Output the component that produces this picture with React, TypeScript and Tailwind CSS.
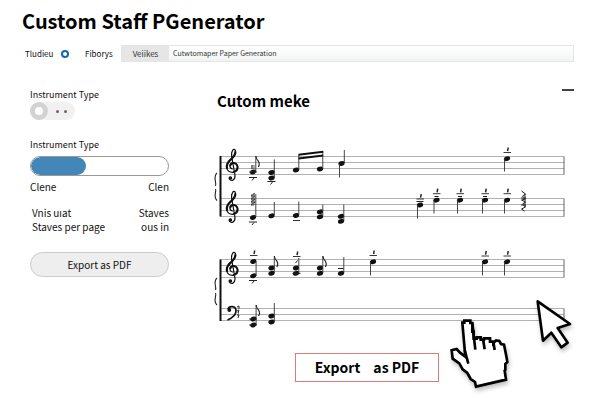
import React from 'react';

interface NoteProps {
  x: number;
  heads: number[];
  stem: [number, number];
  down?: boolean;
  flag?: boolean;
}

function Note({ x, heads, stem, down, flag }: NoteProps) {
  const sx = down ? x - 2.5 : x + 2.8;
  return (
    <g>
      {heads.map((y) => (
        <ellipse key={y} cx={x} cy={y} rx="3.2" ry="2.3" transform={`rotate(-20 ${x} ${y})`} fill="#111" />
      ))}
      <path d={`M${sx} ${stem[0]}V${stem[1]}`} stroke="#333" strokeWidth="0.9" />
      {flag && (
        <path d={`M${sx} ${stem[0]}q0.5 3 2.5 5q2 3 0 6`} stroke="#222" strokeWidth="1.1" fill="none" />
      )}
    </g>
  );
}

// short ledger line with a tick over it
function Accent({ x, y }: { x: number; y: number }) {
  return (
    <g stroke="#222">
      <path d={`M${x - 3.5} ${y}h7.5`} strokeWidth="0.9" />
      <path d={`M${x + 1.2} ${y - 5}l-0.6 3.6`} strokeWidth="1.5" />
    </g>
  );
}

function LowAccent({ x, y }: { x: number; y: number }) {
  return (
    <path d={`M${x - 4} ${y}h8M${x + 1} ${y + 0.5}l-2 2.5`} stroke="#222" strokeWidth="1" fill="none" />
  );
}

function TrebleClef({ y }: { y: number }) {
  return (
    <g transform={`translate(200 ${y}) scale(0.3333)`} fill="none" stroke="#111" strokeLinecap="round">
      <path
        d="M97 252C86 248 88 234 99 233C118 233 120 262 98 262C76 261 76 240 89 227C101 216 110 208 106 196C101 188 93 198 95 214L105 271C106 287 93 290 88 282"
        strokeWidth="3.6"
      />
      <path d="M81 249C79 240 84 231 92 224C100 217 106 211 106 201" strokeWidth="6.5" />
      <path d="M91 241C94 233 107 231 112 243C114 251 108 259 101 261" strokeWidth="5.5" />
      <circle cx="91" cy="279" r="5.5" fill="#111" stroke="none" />
    </g>
  );
}

function BassClef() {
  return (
    <g fill="none" stroke="#111">
      <path d="M228 309.5C229 305.500 236 305.500 236 311C236 315.500 232 318 227.500 320" strokeWidth="1.7" />
      <circle cx="229.3" cy="310" r="1.9" fill="#111" stroke="none" />
      <path d="M237 307l2-1v3M237 311l2-1-1 3h1M237 315h2l-1 3" strokeWidth="0.9" />
    </g>
  );
}

const staves = [
  [156.5, 162.5, 168.5, 174.5],
  [198.5, 204.5, 210.5, 216.5],
  [259.5, 265.5, 271.5, 277.5],
  [308.5, 314.5, 320.5],
];

function Score() {
  return (
    <svg viewBox="212 140 362 195" className="block w-full" role="img" aria-label="Score preview">
      {staves.map((lines) => (
        <g key={lines[0]} stroke="#a8a8a8" strokeWidth="0.9">
          {lines.map((y) => (
            <path key={y} d={`M220 ${y}H564`} />
          ))}
          <path d={`M564 ${lines[0]}V${lines[lines.length - 1]}`} stroke="#555" />
        </g>
      ))}
      <path d="M220.5 156V216.5M220.5 259.5V321" stroke="#111" strokeWidth="2" />
      {/* braces */}
      <g fill="none" stroke="#222" strokeWidth="1.1">
        <path d="M217 173C212.500 177 217 183 215.500 186M215.500 189C217 192 212.500 196 217 200.500" />
        <path d="M217 278C212.500 282 217 287 215.500 290M215.500 293C217 296 212.500 301 217 305" />
      </g>

      <TrebleClef y={85} />
      <TrebleClef y={127} />
      <TrebleClef y={188} />
      <BassClef />

      {/* first staff */}
      <Note x={253} heads={[172]} stem={[156, 172]} flag />
      <path d="M251 166h4M251 168h4M252 165v4M249 172h8" stroke="#333" strokeWidth="0.8" />
      <LowAccent x={253} y={177.5} />
      <Note x={271.5} heads={[172.5, 178]} stem={[159.5, 178]} />
      <LowAccent x={271.5} y={181.5} />
      <Note x={296} heads={[170]} stem={[155, 170]} />
      <Note x={320} heads={[169]} stem={[151, 169]} />
      <path d="M298.4 154.8L323.2 151.8M298.4 158.6L323.2 155.6" stroke="#111" strokeWidth="2" />
      <Note x={341.5} heads={[163.5]} stem={[150, 163]} />
      <path d="M339.5 164V177.5" stroke="#333" strokeWidth="0.9" />
      <Note x={507} heads={[158.7]} stem={[159, 171.5]} down />
      <Accent x={507} y={152.5} />

      {/* second staff */}
      <Note x={253} heads={[217.5]} stem={[194, 217]} />
      <path
        d="M255 193l-4 3h4l-4 3h4l-4 3h4l-4 3h3M252 194v11M254 193v12"
        fill="none"
        stroke="#333"
        strokeWidth="0.8"
      />
      <LowAccent x={253} y={222} />
      <Note x={271.5} heads={[215.8]} stem={[202, 215]} />
      <Note x={296} heads={[215.5]} stem={[201.5, 215]} />
      <path d="M293 220.5h7" stroke="#333" />
      <Note x={320} heads={[211.8, 216.8]} stem={[204.5, 216]} />
      <Note x={341} heads={[216.3, 221.3]} stem={[204.5, 221]} />
      <Note x={420} heads={[205]} stem={[205, 218.5]} down />
      <path d="M416.5 201.5h7" stroke="#222" />
      <Accent x={420} y={199} />
      {[436.5, 460, 485, 507].map((x) => (
        <g key={x}>
          <Note x={x} heads={[200.2]} stem={[200, 213.5]} down />
          {x < 500 && <path d={`M${x - 2} 196.5h4`} stroke="#222" />}
          <Accent x={x} y={193.7} />
        </g>
      ))}
      <path
        d="M521.5 191l4 3-3 2 3 3-4 1 4 2-3 2 3 3-4 2 3 2M525 194v13M521 198h5M521 205h5"
        fill="none"
        stroke="#222"
        strokeWidth="1"
      />

      {/* third staff */}
      <Note x={253.3} heads={[261.5, 275.8]} stem={[261, 276]} />
      <Accent x={253.5} y={255.5} />
      <LowAccent x={253} y={280.5} />
      <Note x={271.5} heads={[268, 273.3]} stem={[256, 273]} flag />
      <Note x={296} heads={[268, 273.3]} stem={[258, 273]} />
      <Accent x={296.5} y={256.5} />
      <path d="M297.5 260.5l-2 2.5M292.5 273.3h8" stroke="#222" />
      <Note x={320} heads={[268, 273.3]} stem={[256, 273]} flag />
      <Note x={341} heads={[273.3]} stem={[257, 273]} />
      <path d="M338 268.5h5.5" stroke="#222" />
      <Note x={373} heads={[261.8]} stem={[262, 275.5]} down />
      <Accent x={373} y={255.5} />
      <Note x={485} heads={[261.8]} stem={[262, 275.5]} down />
      <Accent x={485} y={256} />
      <Note x={507} heads={[261.8]} stem={[262, 275.5]} down />
      <Accent x={507} y={256} />

      {/* bass staff */}
      <Note x={253.3} heads={[319, 325]} stem={[305, 325]} flag />
      <path d="M249 325h8M249 319h8" stroke="#222" strokeWidth="0.8" />
      <Note x={271.5} heads={[316, 322]} stem={[303, 322]} />
    </svg>
  );
}

function Cursors() {
  return (
    <svg
      viewBox="0 0 480 330"
      className="pointer-events-none absolute top-[202px] left-[218px] w-40 drop-shadow-[1px_3px_2px_rgba(0,0,0,0.25)]"
      aria-hidden="true"
    >
      <g fill="#fff" stroke="#000" strokeWidth="8">
        <path d="M97 98H103V92H121V99H127V125H131V146H140V142H152V149H162V145H180V155H190V160L198 151L208 153L213 162L222 164L226 184L230 204L232 216L226 222V240L224 242L228 269L138 290L135 276L122 267L112 249L98 238L88 220L68 206L65 181L80 177L90 188L106 200Z" />
        <path d="M127 100L136 179M159 147L164 178M190 155L194 180M104 180L115 221" fill="none" />
        <path d="M323 34L420 102L383 114L413 158L394 172L364 128L339 152Z" strokeLinejoin="round" />
      </g>
    </svg>
  );
}

function Sidebar() {
  const filled = 40;

  return (
    <aside className="flex w-[139px] shrink-0 flex-col text-[10px] leading-[14px]">
      <label htmlFor="instrument-toggle" className="text-[9px]">
        Instrument Type
      </label>
      <div className="relative flex h-[18px] w-[45px] items-center rounded-full bg-[#f1f1f1]">
        <span className="size-[18px] rounded-full border-5 border-[#d2d2d2] bg-white" />
        <span className="ml-2 size-[3px] rounded-full bg-[#666]" />
        <span className="ml-[5px] size-[3px] rounded-full bg-[#666]" />
        <input id="instrument-toggle" type="checkbox" className="absolute inset-0 size-full opacity-0" />
      </div>

      <label htmlFor="instrument-range" className="mt-[18px] text-[9px]">
        Instrument Type
      </label>
      <div className="relative mt-1 h-5 overflow-hidden rounded-full border border-[#999] bg-white">
        <div className="h-full rounded-full bg-[#4287b8]" style={{ width: `${filled}%` }} />
        <input
          id="instrument-range"
          type="range"
          defaultValue={filled}
          className="absolute inset-0 size-full opacity-0"
        />
      </div>
      <div className="mt-1 flex justify-between">
        <span>Clene</span>
        <span>Clen</span>
      </div>

      <div className="mt-3 flex justify-between pl-[2px]">
        <span>Vnis uıat</span>
        <span>Staves</span>
      </div>
      <div className="flex justify-between pl-[2px]">
        <span>Staves per page</span>
        <span>ous in</span>
      </div>

      <button type="button" className="mt-[18px] h-[25px] rounded-full border border-[#ccc] bg-[#eee]">
        Export as PDF
      </button>
    </aside>
  );
}

export default function App() {
  return (
    <div className="min-h-screen bg-white pr-[26px] pb-4 font-['Noto_Sans_CJK_SC','Noto_Sans',sans-serif] text-[#111]">
      <header className="pt-[7px] pl-[22px]">
        <h1 className="text-[20px] leading-7 font-bold text-black">Custom Staff PGenerator</h1>
        <nav className="mt-[10px] flex h-[17px] items-center pl-[3px] text-[8px]">
          <label htmlFor="view-radio" className="w-9">
            Tludieu
          </label>
          <input
            id="view-radio"
            type="radio"
            className="size-2 appearance-none rounded-full border-2 border-[#1466ae] bg-white"
          />
          <a href="#fiborys" className="ml-4 w-9">
            Fiborys
          </a>
          <div className="flex h-full grow border border-[#e3e5e6] bg-linear-to-b from-white to-[#f2f4f4]">
            <button type="button" className="w-[47px] bg-[#e6e6e6] text-[#333]">
              Veiikes
            </button>
            <input
              type="text"
              aria-label="Paper name"
              defaultValue="Cutwtomaper Paper Generation"
              className="min-w-0 grow bg-transparent px-1 text-[7px] text-[#333] outline-none"
            />
          </div>
        </nav>
      </header>

      <main className="mt-[26px] flex gap-[43px] pl-[30px]">
        <Sidebar />
        <section className="relative min-w-0 grow">
          <div className="flex items-start justify-between pt-px pl-[5px]">
            <h2 className="text-[15px] leading-6 font-bold text-black">Cutom meke</h2>
            <button type="button" aria-label="Minimize" className="h-[2px] w-3 bg-[#444]" />
          </div>
          <div className="mt-[27px]">
            <Score />
          </div>
          <button
            type="button"
            className="mt-[18px] ml-[83px] flex h-[29px] w-36 items-center justify-center gap-[13px] border border-[#dc7c78] bg-white text-[14px] font-bold text-black"
          >
            <span>Export</span>
            <span>as PDF</span>
          </button>
          <Cursors />
        </section>
      </main>
    </div>
  );
}
